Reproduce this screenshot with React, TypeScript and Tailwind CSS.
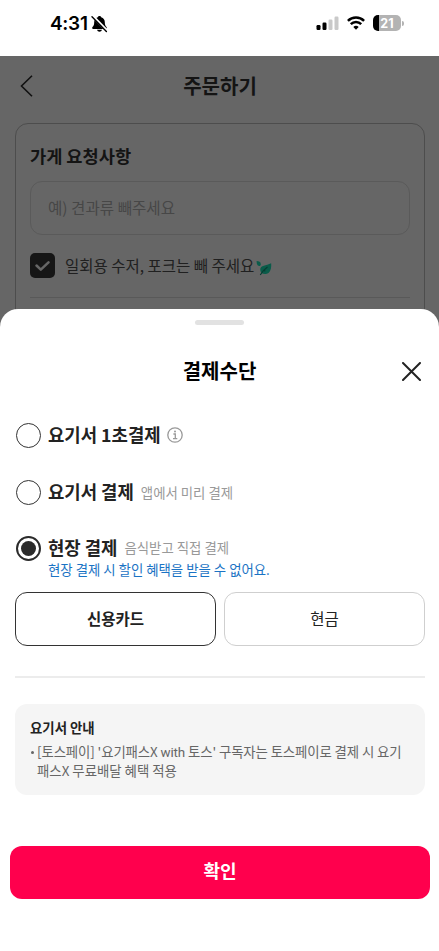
import { ReactNode } from "react";

function StatusBar() {
  return (
    <div className="flex h-14 shrink-0 items-start justify-between bg-white pl-[50px] pr-[35px] pt-[13px]">
      <div className="flex items-center gap-[3px]">
        <span className="font-['Inter',sans-serif] text-[19px] leading-[22px] font-semibold tracking-[-0.3px] text-black">4:31</span>
        <svg width="17" height="18" viewBox="0 0 17 18">
          <path d="M8.500 1c-1 0-1.600.6-1.700 1.300C4.300 3 3.200 5 3.200 7.300c0 2.700-.7 3.700-1.700 4.700-.6.600-.3 1.900.6 1.900h12.800c.9 0 1.200-1.300.6-1.900-1-1-1.700-2-1.700-4.700 0-2.300-1.100-4.300-3.600-5C10.100 1.600 9.500 1 8.500 1zM6 14.800c.3 1.200 1.400 1.900 2.500 1.900s2.200-.7 2.500-1.900z" fill="#000" />
          <path d="M1.800 1.300 16 15.800" stroke="#fff" strokeWidth="2.800" />
          <path d="M1 1.800 15.400 16.400" stroke="#000" strokeWidth="1.400" strokeLinecap="round" />
        </svg>
      </div>
      <div className="flex items-center gap-[8px] pt-[2px]">
        <svg width="23" height="16" viewBox="0 0 23 16">
          <rect x="0.500" y="10" width="4" height="5" rx="1.200" fill="#000" />
          <rect x="6.500" y="7.500" width="4" height="7.500" rx="1.200" fill="#000" />
          <rect x="12.500" y="4.500" width="4" height="10.500" rx="1.200" fill="#c9c9c9" />
          <rect x="18.500" y="1.500" width="4" height="13.500" rx="1.200" fill="#c9c9c9" />
        </svg>
        <svg width="18" height="16" viewBox="0 0 18 16" fill="none" stroke="#000" strokeWidth="2.500">
          <path d="M.9 5.800a11.500 11.500 0 0 1 16.200 0" />
          <path d="M3.800 9.200a7.300 7.300 0 0 1 10.400 0" />
          <path d="M9 14.800 6.300 12a3.800 3.800 0 0 1 5.400 0z" fill="#000" stroke="none" />
        </svg>
        <div className="flex items-center gap-px">
          <div className="flex h-4 w-7 items-center justify-center rounded-[5px] bg-[linear-gradient(90deg,#000_0_6px,#b3b3b3_6px)] pt-px font-['Inter',sans-serif] text-[12.500px] leading-4 font-bold text-white">21</div>
          <div className="h-[5px] w-[2px] rounded-r-full bg-[#b3b3b3]" />
        </div>
      </div>
    </div>
  );
}

function Leaf() {
  return (
    <svg width="16" height="16" viewBox="0 0 15 15" className="mt-[5px]">
      <path d="M.6 1c2.200 0 3.900 1.100 3.900 2.900 0 .9-.6 1.700-1.500 1.700C1 5.600.6 3.300.6 1z" fill="#0a5c4a" />
      <path d="M14.200 3c.4 4.200-.4 10.200-5.600 10.200-2.800 0-4.600-1.600-4.600-4.100C4 4.600 9.500 5.400 14.200 3z" fill="#0a5c4a" />
      <path d="M10.800 6.600C8 8.600 5.600 10.700 4 14M8.200 8.600v2.200" stroke="#083b31" strokeWidth="1" fill="none" />
    </svg>
  );
}

function OrderPage() {
  return (
    <div className="flex h-[273px] shrink-0 flex-col overflow-hidden bg-[#666]">
      <div className="flex h-[67px] shrink-0 items-center px-[20px] pb-[8px]">
        <svg width="14" height="22" viewBox="0 0 14 22" className="shrink-0">
          <path d="M12 .8 1.500 11 12 21.200" fill="none" stroke="#111" strokeWidth="1.600" />
        </svg>
        <h1 className="flex-1 pt-px pr-[13px] text-center text-[20px] leading-[30px] font-bold text-[#141414]">주문하기</h1>
      </div>
      <div className="mr-[14px] ml-[15px] h-[230px] shrink-0 rounded-[13px] border border-[#4d4d4d] px-[14px]">
        <h2 className="mt-[18px] text-[17.600px] leading-[28px] font-bold text-[#141414]">가게 요청사항</h2>
        <div className="mt-[11px] flex h-[54px] items-center rounded-[12px] border border-[#5a5a5a] px-[17px] pb-px text-[15.600px] text-[#474747]">예) 견과류 빼주세요</div>
        <div className="mt-[18px] flex h-[25px] items-center">
          <div className="flex size-[25px] items-center justify-center rounded-[5px] bg-[#161616]">
            <svg width="15" height="12" viewBox="0 0 15 12">
              <path d="m1.500 5.500 4.300 4.200 7.700-7.400" fill="none" stroke="#666" strokeWidth="2.500" strokeLinecap="round" strokeLinejoin="round" />
            </svg>
          </div>
          <span className="mr-[2px] ml-[10px] text-[15.500px] text-[#202020]">일회용 수저, 포크는 빼 주세요</span>
          <Leaf />
        </div>
        <div className="mt-[19px] h-px bg-[#595959]" />
      </div>
    </div>
  );
}

function Radio({ checked = false }: { checked?: boolean }) {
  return (
    <span className={checked ? "flex size-[25px] shrink-0 items-center justify-center rounded-full border-2 border-[#2b2b2b]" : "size-[25px] shrink-0 rounded-full border-[1.500px] border-[#333]"}>
      {checked && <span className="size-[15px] rounded-full bg-[#2b2b2b]" />}
    </span>
  );
}

function Option({ label, checked, children }: { label: string; checked?: boolean; children: ReactNode }) {
  return (
    <div className="flex h-[26px] items-center">
      <Radio checked={checked} />
      <span className="ml-[7px] pb-[2px] text-[17.800px] leading-[24px] font-bold text-[#222]">{label}</span>
      {children}
    </div>
  );
}

function PaymentSheet() {
  return (
    <div className="relative -mt-[20px] flex flex-1 flex-col rounded-t-[18px] bg-white">
      <div className="mt-[11px] h-[5px] w-[49px] self-center rounded-full bg-[#e2e2e2]" />
      <div className="mt-[31px] flex h-[30px] items-center pl-[37px] pr-[18px]">
        <h2 className="flex-1 text-center text-[20px] leading-[30px] font-bold text-black">결제수단</h2>
        <svg width="19" height="19" viewBox="0 0 19 19">
          <path d="m1 1 17 17M18 1 1 18" stroke="#222" strokeWidth="2" strokeLinecap="round" />
        </svg>
      </div>
      <div className="mt-[36px] px-[16px]">
        <Option label="요기서 1초결제">
          <svg width="16" height="16" viewBox="0 0 16 16" className="ml-[6px]" fill="none" stroke="#999">
            <circle cx="8" cy="8" r="7.200" strokeWidth="1.300" />
            <path d="M6.400 7h1.900v4.500M6 11.600h4.300" strokeWidth="1.300" />
            <circle cx="8" cy="4.500" r="1" fill="#999" stroke="none" />
          </svg>
        </Option>
        <div className="h-[31px]" />
        <Option label="요기서 결제">
          <span className="ml-[7px] text-[13.400px] text-[#999]">앱에서 미리 결제</span>
        </Option>
        <div className="h-[30px]" />
        <Option label="현장 결제" checked>
          <span className="ml-[7px] pb-px text-[13.400px] text-[#999]">음식받고 직접 결제</span>
        </Option>
        <p className="-mt-px ml-[32px] text-[13.400px] leading-[18px] text-[#1a73c4]">현장 결제 시 할인 혜택을 받을 수 없어요.</p>
      </div>
      <div className="mr-[14px] ml-[15px] mt-[14px] grid grid-cols-2 gap-[8px]">
        <button className="h-[54px] rounded-[12px] border-[1.500px] border-[#333] pb-px text-[15.500px] font-bold text-[#222]">신용카드</button>
        <button className="h-[54px] rounded-[12px] border-[1.500px] border-[#cfcfcf] pb-px text-[15.500px] text-[#222]">현금</button>
      </div>
      <div className="mr-[14px] ml-[15px] mt-[30px] h-[2px] bg-[#ececec]" />
      <div className="mr-[14px] ml-[15px] mt-[26px] h-[91px] rounded-[12px] bg-[#f5f5f5] px-[15px] pt-[13px]">
        <h3 className="text-[13.400px] leading-[20px] font-bold text-[#222]">요기서 안내</h3>
        <div className="mt-[6px] flex text-[13.400px] leading-[17.500px] text-[#666]">
          <span className="mt-[7.500px] mr-[3px] ml-[1px] size-[3px] shrink-0 rounded-full bg-[#666]" />
          <p className="whitespace-nowrap">
            <span className="tracking-[-0.110px]">[토스페이] '요기패스X <span className="font-['Roboto',sans-serif]">with</span> 토스' 구독자는 토스페이로 결제 시 요기</span>
            <br />
            패스X 무료배달 혜택 적용
          </p>
        </div>
      </div>
      <button className="mr-[9px] ml-[10px] mt-[51px] h-[53px] rounded-[12px] bg-[#ff004d] pb-[4px] text-[18px] font-bold text-white">확인</button>
    </div>
  );
}

export default function App() {
  return (
    <div className="flex h-[951px] w-[439px] flex-col overflow-hidden bg-white font-['Noto_Sans_CJK_KR',sans-serif]">
      <StatusBar />
      <OrderPage />
      <PaymentSheet />
    </div>
  );
}
